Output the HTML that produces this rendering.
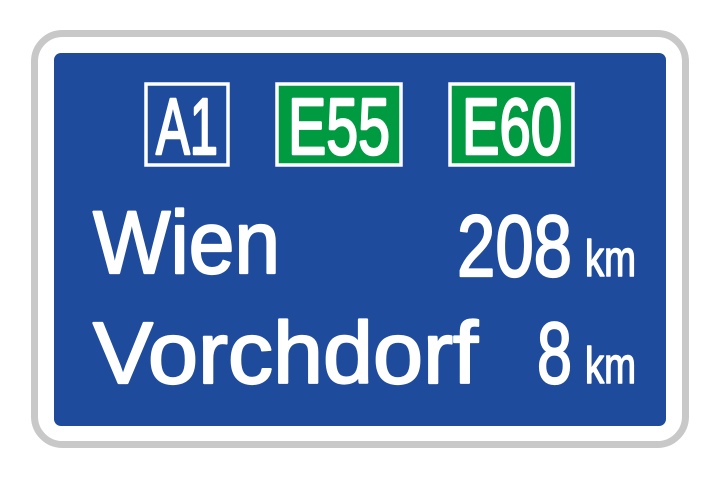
<!DOCTYPE html>
<html><head><style>
html,body{margin:0;padding:0;background:#fff;width:720px;height:480px;overflow:hidden}
</style></head><body>
<svg width="720" height="480" viewBox="0 0 720 480" xmlns="http://www.w3.org/2000/svg" font-family="'Liberation Sans', sans-serif" fill="#fff">
<rect x="34.5" y="33.5" width="651" height="411" rx="28" fill="#fff" stroke="#c8c8c8" stroke-width="7"/>
<rect x="54" y="53" width="612" height="373" rx="7" fill="#1f4b9c"/>
<rect x="146" y="84" width="82" height="81" fill="#1f4b9c" stroke="#fff" stroke-width="3.5"/>
<rect x="277" y="84" width="124" height="81" fill="#009a40" stroke="#fff" stroke-width="3.5"/>
<rect x="450" y="84" width="123" height="81" fill="#009a40" stroke="#fff" stroke-width="3.5"/>
<g stroke="#fff" stroke-width="2.6" stroke-linejoin="round">
<text x="156" y="154" font-size="80" textLength="62" lengthAdjust="spacingAndGlyphs">A1</text>
<text x="288" y="154" font-size="80" textLength="102" lengthAdjust="spacingAndGlyphs">E55</text>
<text x="462" y="154" font-size="80" textLength="100" lengthAdjust="spacingAndGlyphs">E60</text>
</g>
<g stroke="#fff" stroke-width="2.2" stroke-linejoin="round">
<text x="93" y="273" font-size="89" textLength="187" lengthAdjust="spacingAndGlyphs">Wien</text>
<text x="457" y="276" font-size="87" textLength="115" lengthAdjust="spacingAndGlyphs">208</text>
<text x="537" y="383" font-size="87" textLength="35" lengthAdjust="spacingAndGlyphs">8</text>
<text x="93" y="383" font-size="87" textLength="385" lengthAdjust="spacingAndGlyphs">Vorchdorf</text>
</g>
<g stroke="#fff" stroke-width="1.6" stroke-linejoin="round">
<text x="585" y="276" font-size="51" textLength="51" lengthAdjust="spacingAndGlyphs">km</text>
<text x="585" y="383" font-size="51" textLength="51" lengthAdjust="spacingAndGlyphs">km</text>
</g>
</svg>
</body></html>
